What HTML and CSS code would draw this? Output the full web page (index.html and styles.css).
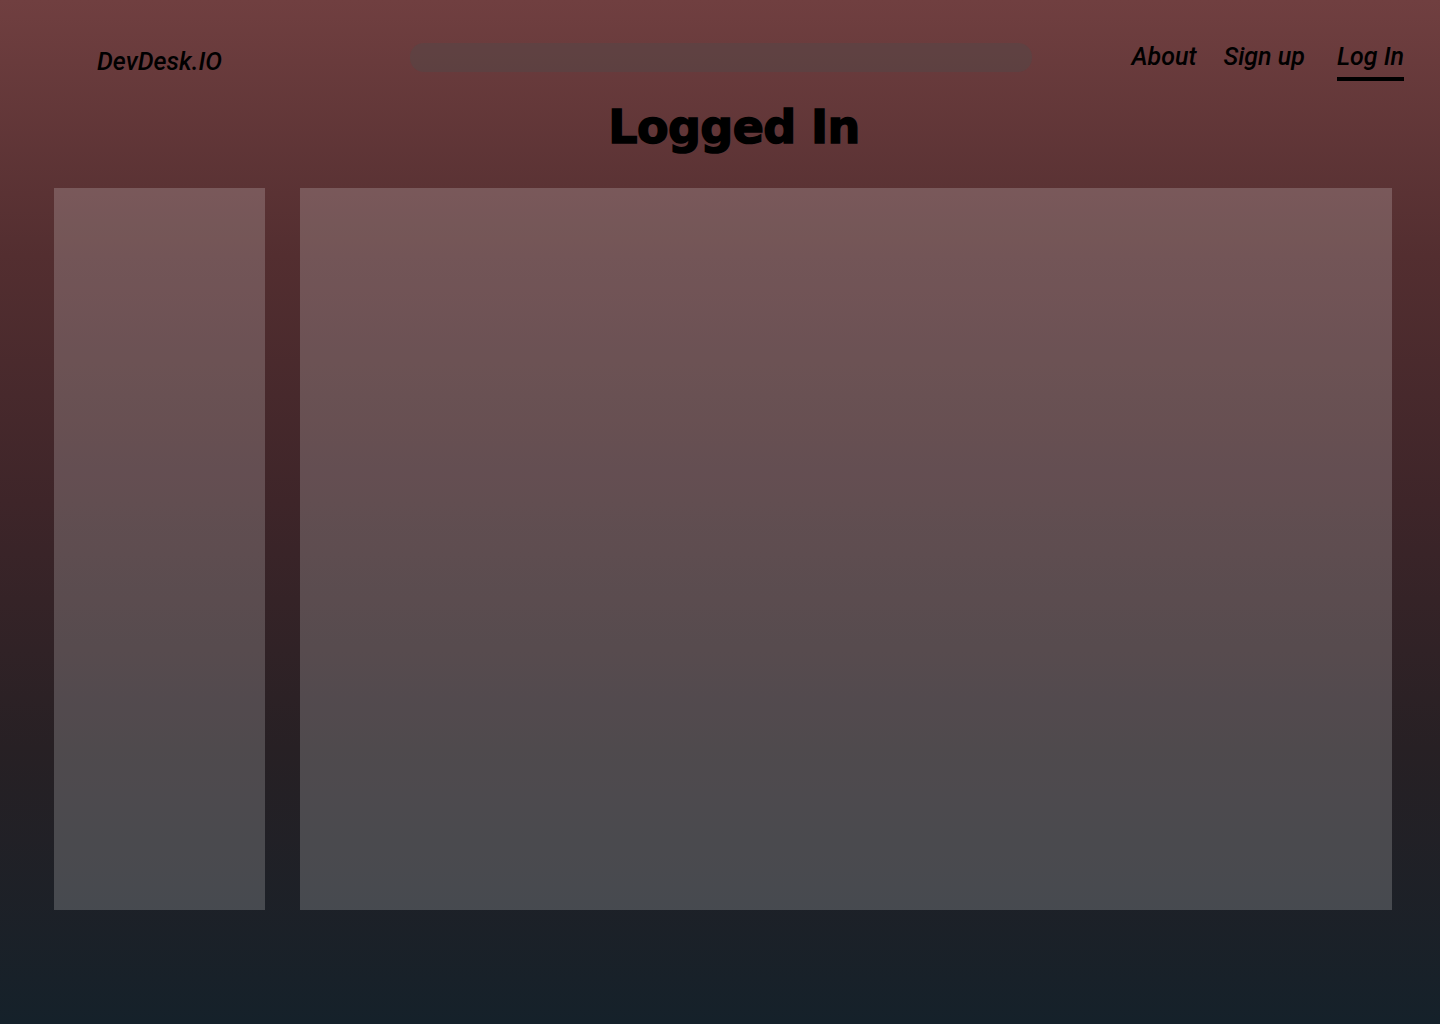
FILE: index.html
```html
<!DOCTYPE html>
<html lang="en">
<head>
  <meta charset="UTF-8" />
  <meta name="viewport" content="width=device-width, initial-scale=1" />
  <title>DevDesk.IO</title>
  <link rel="stylesheet" href="styles.css">
</head>
<body>

  <header>
    <div class="logo">DevDesk.IO</div>
    <div class="search-bar"></div>
    <nav>
      <a href="#">About</a>
      <a href="#">Sign up</a>
      <a href="#" class="active">Log In</a>
    </nav>
  </header>

  <h1 class="page-title">Logged In</h1>

  <main>
    <aside class="sidebar"></aside>
    <section class="content"></section>
  </main>

</body>
</html>
```

FILE: styles.css
```css
* {
  box-sizing: border-box;
  margin: 0;
  padding: 0;
}

html, body {
  height: 100%;
}

body {
  font-family: Roboto, 'Liberation Sans', sans-serif;
  color: #000;
  background: linear-gradient(to bottom, #703f40 0%, #532e30 25%, #3e2529 49%, #272024 73%, #15212a 100%);
  min-height: 100vh;
}

header {
  display: flex;
  align-items: flex-start;
  height: 96px;
  padding: 0 36px 0 54px;
}

.logo {
  width: 211px;
  text-align: center;
  font-style: italic;
  font-weight: 500;
  font-size: 25px;
  padding-top: 47px;
  line-height: 30px;
}

.search-bar {
  width: 622px;
  height: 29px;
  margin-top: 43px;
  margin-left: 145px;
  border-radius: 14px;
  background: rgba(75, 75, 75, 0.37);
}

nav {
  margin-left: auto;
  display: flex;
  gap: 27px;
  padding-top: 42px;
}

nav a {
  color: #000;
  text-decoration: none;
  font-style: italic;
  font-weight: 500;
  font-size: 25px;
  line-height: 30px;
  padding-bottom: 5px;
  border-bottom: 4px solid transparent;
}

nav a.active {
  margin-left: 5px;
  border-bottom-color: #000;
}

.page-title {
  text-align: center;
  font-family: 'DejaVu Sans', 'Liberation Sans', sans-serif;
  font-weight: 700;
  font-size: 46px;
  line-height: 60px;
  margin-top: 1px;
  padding-left: 28px;
  letter-spacing: -0.6px;
  -webkit-text-stroke: 1.5px #000;
}

main {
  display: flex;
  gap: 35px;
  padding: 0 48px 0 54px;
  margin-top: 31px;
}

.sidebar {
  width: 211px;
  height: 722px;
  background: rgba(255, 255, 255, 0.19);
}

.content {
  flex: 1;
  height: 722px;
  background: rgba(255, 255, 255, 0.19);
}
```
